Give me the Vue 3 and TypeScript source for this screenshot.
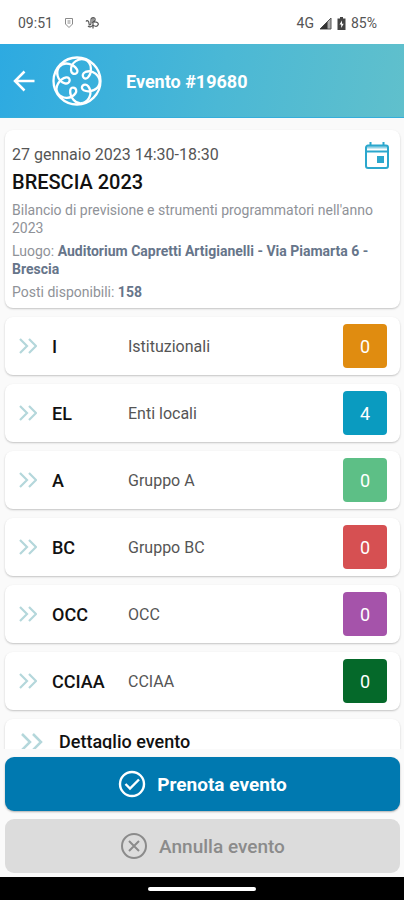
<script setup lang="ts">
interface Group {
  code: string
  name: string
  count: number
  color: string
}

const groups: Group[] = [
  { code: 'I', name: 'Istituzionali', count: 0, color: '#e08c10' },
  { code: 'EL', name: 'Enti locali', count: 4, color: '#0a9bc0' },
  { code: 'A', name: 'Gruppo A', count: 0, color: '#5dbf86' },
  { code: 'BC', name: 'Gruppo BC', count: 0, color: '#d65052' },
  { code: 'OCC', name: 'OCC', count: 0, color: '#a553aa' },
  { code: 'CCIAA', name: 'CCIAA', count: 0, color: '#05692a' },
]

const petals: number[] = [-15, 57, 129, 201, 273]
</script>

<template>
  <div class="screen">
    <div class="status">
      <div class="status-group">
        <span>09:51</span>
        <svg width="10" height="12" viewBox="0 0 10 12" fill="none" stroke="#8a8a8a">
          <path d="M1.5 1.5h7v5.5L5 10.5 1.5 7z" />
          <path d="M3.5 4h3M3.5 6h3" />
        </svg>
        <svg width="14" height="14" viewBox="0 0 14 14" fill="none" stroke="#555" stroke-width="1.2">
          <path d="M1 5.500c1.500-2 3 0 3 2s2 2 2-.5C6 4 5.500 1.500 8 1.500s3.500 3.500-1 5c5-1.500 7 .5 6 2.500s-4 1.500-5.500-.5M8 2v10.500M3 10c1.500 1.500 3.500 1 5-1" />
        </svg>
      </div>
      <div class="status-group right">
        <span>4G</span>
        <svg width="13" height="13" viewBox="0 0 13 13">
          <path d="M12 1v11H1z" fill="#aaa" stroke="#555" />
          <path d="M8.500 4.500V12H1z" fill="#333" />
        </svg>
        <svg width="9" height="13" viewBox="0 0 9 13">
          <path d="M3 0h3v1.500h2.500V13h-8V1.500H3z" fill="#444" />
          <path d="M5 3.500L2.500 7.500h1.700V11l2.500-4.300H5z" fill="#fff" />
        </svg>
        <span>85%</span>
      </div>
    </div>

    <header class="header">
      <button class="icon-button" type="button" aria-label="Indietro">
        <svg width="22" height="22" viewBox="0 0 22 22" fill="none" stroke="#fff" stroke-width="2.500">
          <path d="M21.500 11H2M11.500 1.500L2 11l9.500 9.500" />
        </svg>
      </button>
      <svg class="logo" width="50" height="50" viewBox="-25 -25 50 50" fill="none" stroke="#fff" stroke-width="2.300">
        <circle r="23.500" />
        <path
          v-for="angle in petals"
          :key="angle"
          :transform="`rotate(${angle})`"
          d="M13.400 -18.400C8 -22 -1 -20 -3 -12C-4 -6 4 -6 3 -11C1.500 -17 -7 -23 -13.400 -18.400"
        />
      </svg>
      <h1>Evento #19680</h1>
    </header>

    <main class="content">
      <section class="card event">
        <div class="event-top">
          <div>
            <p class="date">27 gennaio 2023 14:30-18:30</p>
            <h2>BRESCIA 2023</h2>
          </div>
          <button class="icon-button" type="button" aria-label="Aggiungi al calendario">
            <svg width="24" height="27" viewBox="0 0 24 27">
              <path d="M3 3.500h18a2 2 0 0 1 2 2V24a2 2 0 0 1-2 2H3a2 2 0 0 1-2-2V5.500a2 2 0 0 1 2-2zM1 9.500h22M5.500 0v4M18.500 0v4" fill="none" stroke="#2ba7cd" stroke-width="2" />
              <path d="M2 4h20v2.500H2z" fill="#2ba7cd" fill-opacity="0.5" />
              <rect x="12" y="14" width="7" height="7" fill="#2ba7cd" />
            </svg>
          </button>
        </div>
        <p>Bilancio di previsione e strumenti programmatori nell'anno 2023</p>
        <p>Luogo: <strong>Auditorium Capretti Artigianelli - Via Piamarta 6 - Brescia</strong></p>
        <p>Posti disponibili: <strong>158</strong></p>
      </section>

      <ul class="groups">
        <li v-for="group in groups" :key="group.code" class="card row">
          <svg width="18" height="16" viewBox="0 0 18 16" fill="none" stroke="#b4d7db" stroke-width="2.200">
            <path d="M1 1l7 7-7 7M10 1l7 7-7 7" />
          </svg>
          <span class="code">{{ group.code }}</span>
          <span class="name">{{ group.name }}</span>
          <span class="count" :style="{ backgroundColor: group.color }">{{ group.count }}</span>
        </li>
      </ul>

      <button class="card detail" type="button">
        <svg width="22" height="18" viewBox="0 0 22 18" fill="none" stroke="#b4d7db" stroke-width="2.500">
          <path d="M1 1l8 8-8 8M12 1l8 8-8 8" />
        </svg>
        <span>Dettaglio evento</span>
      </button>
    </main>

    <footer class="actions">
      <button class="action primary" type="button">
        <svg width="28" height="28" viewBox="0 0 28 28" fill="none" stroke="currentColor" stroke-width="2.400">
          <circle cx="14" cy="14" r="12" />
          <path d="M7.500 14l4.500 4.500L21 9.500" />
        </svg>
        Prenota evento
      </button>
      <button class="action" type="button" disabled>
        <svg width="28" height="28" viewBox="0 0 28 28" fill="none" stroke="currentColor" stroke-width="2">
          <circle cx="14" cy="14" r="12" />
          <path d="M9 9l10 10M19 9L9 19" />
        </svg>
        Annulla evento
      </button>
    </footer>
    <div class="system-bar"><div class="handle"></div></div>
  </div>
</template>

<style>
body {
  margin: 0;
}
</style>

<style scoped>
.screen {
  display: flex;
  flex-direction: column;
  height: 100vh;
  background: #fafafa;
  color: #111;
  font-family: Roboto, "Liberation Sans", sans-serif;
}
.screen * {
  box-sizing: border-box;
}
p,
h1,
h2,
ul {
  margin: 0;
  padding: 0;
}
button {
  border: 0;
  font-family: inherit;
}
svg {
  display: block;
  flex: none;
}
.status {
  display: flex;
  flex: none;
  justify-content: space-between;
  align-items: center;
  height: 44px;
  padding: 2px 27px 0 18px;
  background: #fff;
  color: #555;
  font-size: 14px;
}
.status-group {
  display: flex;
  align-items: center;
  gap: 11px;
}
.status-group.right {
  gap: 5px;
}
.header {
  display: flex;
  flex: none;
  align-items: center;
  height: 74px;
  padding: 1px 13px 0;
  background: linear-gradient(100deg, #2daae1, #4bb8d5 55%, #60c0cc);
  border-bottom: 1px solid #35aedb;
}
.icon-button {
  padding: 0;
  background: none;
}
.logo {
  margin: 0 24px 0 17px;
}
h1 {
  color: #fff;
  font-size: 18px;
  font-weight: 700;
}
.content {
  display: flex;
  flex: 1;
  flex-direction: column;
  gap: 9px;
  min-height: 0;
  padding: 12px 4px 0 5px;
  overflow-y: auto;
  scrollbar-width: none;
}
.card {
  flex: none;
  background: #fff;
  border-radius: 8px;
  box-shadow: 0 1px 2px rgba(0, 0, 0, 0.22);
}
.event {
  display: flex;
  flex-direction: column;
  gap: 5px;
  padding: 12px 7px 7px;
  color: #8f9298;
  font-size: 14px;
  line-height: 18px;
}
.event-top {
  display: flex;
  justify-content: space-between;
  align-items: flex-start;
  padding-right: 4px;
}
.event .date {
  padding-top: 3px;
  color: #555;
  font-size: 16px;
  line-height: 20px;
}
h2 {
  padding-top: 3px;
  color: #111;
  font-size: 20px;
  font-weight: 500;
  line-height: 28px;
}
strong {
  color: #66758a;
  font-weight: 700;
}
.groups {
  display: flex;
  flex-direction: column;
  gap: 9px;
  list-style: none;
}
.row {
  display: grid;
  grid-template-columns: 18px 61px 1fr 44px;
  column-gap: 15px;
  align-items: center;
  height: 58px;
  padding: 0 13px 0 14px;
}
.code {
  font-size: 18px;
  font-weight: 500;
}
.name {
  color: #555;
  font-size: 16px;
}
.count {
  display: flex;
  align-items: center;
  justify-content: center;
  height: 44px;
  border-radius: 4px;
  color: #fff;
  font-size: 18px;
}
.detail {
  display: flex;
  align-items: center;
  gap: 16px;
  height: 45px;
  padding: 0 16px;
  color: #111;
  font-size: 18px;
  font-weight: 500;
}
.actions {
  display: flex;
  flex: none;
  flex-direction: column;
  gap: 8px;
  padding: 8px 4px 4px 5px;
}
.action {
  display: flex;
  align-items: center;
  justify-content: center;
  gap: 11px;
  height: 54px;
  border-radius: 9px;
  background: #dcdcdc;
  color: #8b8b8b;
  font-size: 19px;
  font-weight: 500;
}
.action.primary {
  background: #0079b0;
  box-shadow: 0 1px 2px rgba(0, 0, 0, 0.3);
  color: #fff;
  font-weight: 700;
}
.system-bar {
  display: flex;
  flex: none;
  align-items: center;
  justify-content: center;
  height: 23px;
  background: #000;
}
.handle {
  width: 108px;
  height: 4px;
  border-radius: 2px;
  background: #fff;
}
</style>
